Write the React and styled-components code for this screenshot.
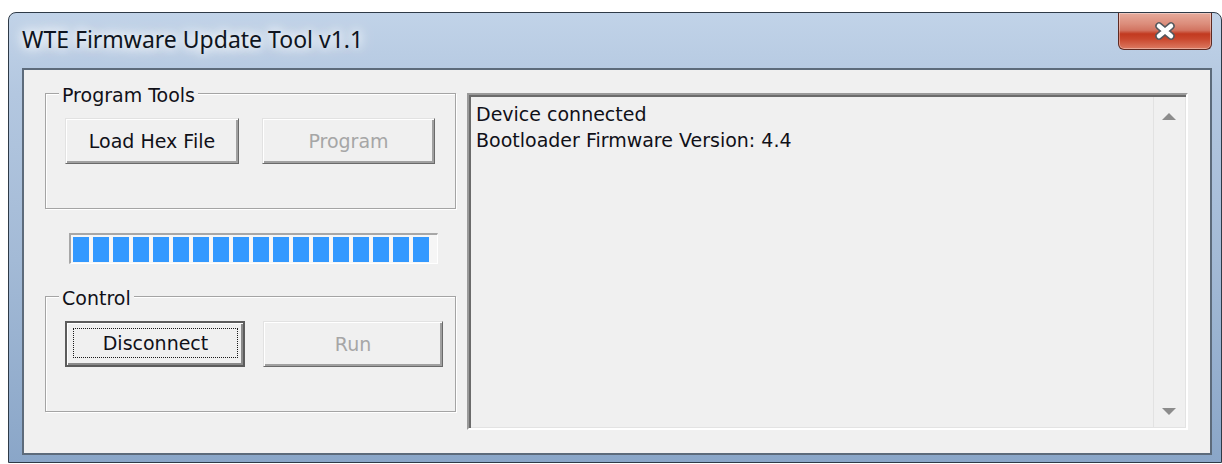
import React from "react";
import styled, { createGlobalStyle } from "styled-components";

const GlobalStyle = createGlobalStyle`
  html, body { margin: 0; padding: 0; background: #ffffff; }
  body { font-family: 'DejaVu Sans', 'Liberation Sans', sans-serif; }
  * { box-sizing: border-box; }
`;

const UI_FONT = `'DejaVu Sans', 'Liberation Sans', sans-serif`;

const Window = styled.div`
  margin: 12px 0 0 8px;
  width: 1214px;
  height: 451px;
  display: flex;
  flex-direction: column;
  padding: 0 9px 7px 13px;
  border: 1px solid #2e3a47;
  border-radius: 8px 8px 0 0;
  background: linear-gradient(180deg, #c1d3e8 0%, #b3c7e0 18%, #a3bad6 55%, #8aa6c8 100%);
  overflow: hidden;
`;

const TitleBar = styled.div`
  height: 55px;
  display: flex;
  justify-content: space-between;
  align-items: flex-start;
`;

const Title = styled.div`
  margin-top: 12px;
  font-family: 'Noto Sans', 'Open Sans', sans-serif;
  font-size: 23px;
  line-height: 28px;
  color: #0e1420;
  text-shadow: 0 0 10px #ffffff, 0 0 14px #ffffff, 0 0 20px rgba(255, 255, 255, 0.85);
`;

const CloseButton = styled.div`
  width: 94px;
  height: 37px;
  display: flex;
  align-items: center;
  justify-content: center;
  border: 1px solid #5e2a22;
  border-top: none;
  border-radius: 0 0 6px 6px;
  background: linear-gradient(
    180deg,
    #e6ab9c 0%,
    #dc8d7b 30%,
    #d27461 48%,
    #c23a20 58%,
    #c9472d 72%,
    #dc7a62 100%
  );
  box-shadow: inset 0 0 0 1px rgba(255, 255, 255, 0.35);
`;

const Client = styled.div`
  flex: 1;
  display: flex;
  gap: 11px;
  padding: 23px 22px 0 21px;
  border: 2px solid #5d6b7b;
  background: #f0f0f0;
  font-family: ${UI_FONT};
  font-size: 19px;
  color: #101018;
`;

const LeftColumn = styled.div`
  width: 411px;
  display: flex;
  flex-direction: column;
`;

const GroupBox = styled.div`
  height: 116px;
  display: flex;
  flex-direction: column;
  border: 1px solid #a4a4a4;
  box-shadow: inset 1px 1px 0 #ffffff, 1px 1px 0 #ffffff;
`;

const Caption = styled.span`
  align-self: flex-start;
  margin: -9px 0 0 13px;
  padding: 0 3px;
  line-height: 20px;
  background: #f0f0f0;
  white-space: nowrap;
`;

const ButtonRow = styled.div`
  display: flex;
  gap: ${(p) => p.$gap}px;
  margin: 13px 0 0 19px;
`;

const Button = styled.div`
  width: ${(p) => p.$width}px;
  height: 46px;
  display: flex;
  align-items: center;
  justify-content: center;
  line-height: 22px;
  white-space: nowrap;
  background: #f0f0f0;
  color: ${(p) => (p.$disabled ? "#a6a6a6" : "#101018")};
  border: 1px solid;
  border-color: #e2e2e2 #6a6a6a #6a6a6a #e2e2e2;
  box-shadow: inset 1px 1px 0 #ffffff, inset -2px -2px 0 #a0a0a0;
`;

const DefaultButton = styled.div`
  width: ${(p) => p.$width}px;
  height: 46px;
  display: flex;
  padding: 5px 5px 7px 6px;
  background: #f0f0f0;
  border: 2px solid #5c5c5c;
  box-shadow: inset 1px 1px 0 #ffffff, inset -2px -2px 0 #8a8a8a;
`;

const FocusFrame = styled.div`
  flex: 1;
  display: flex;
  align-items: center;
  justify-content: center;
  line-height: 22px;
  border: 1px dotted #1a1a1a;
`;

const Progress = styled.div`
  width: 369px;
  height: 31px;
  margin: 24px 0 32px 24px;
  display: flex;
  gap: 4px;
  padding: 2px 0 0 2px;
  background: #f6f6f6;
  border-style: solid;
  border-width: 2px 1px 1px 2px;
  border-color: #a7a7a7 #ffffff #ffffff #a7a7a7;
`;

const Block = styled.div`
  width: 16px;
  height: 25px;
  background: #3399ff;
`;

const LogBox = styled.div`
  width: 721px;
  height: 337px;
  display: flex;
  border-style: solid;
  border-width: 2px;
  border-color: #9a9a9a #ffffff #ffffff #9a9a9a;
  box-shadow: inset 2px 2px 0 #6b6b6b, inset -1px -1px 0 #e3e3e3;
  background: #f0f0f0;
`;

const LogText = styled.div`
  flex: 1;
  padding: 6px 0 0 7px;
  line-height: 26px;
`;

const ScrollTrack = styled.div`
  width: 31px;
  display: flex;
  flex-direction: column;
  justify-content: space-between;
  align-items: center;
  padding: 16px 0 12px;
  margin: 2px 2px 1px 0;
  border-left: 1px solid #e2e2e2;
  background: #f0f0f0;
`;

const Arrow = ({ down }) => (
  <svg width="14" height="7" viewBox="0 0 14 7">
    <path d={down ? "M0 0 L14 0 L7 7 Z" : "M7 0 L14 7 L0 7 Z"} fill="#8c8c8c" />
  </svg>
);

const CloseGlyph = () => (
  <svg width="22" height="18" viewBox="0 0 22 18">
    <path
      d="M5 4 L17 14 M17 4 L5 14"
      stroke="#55595e"
      strokeWidth="7.5"
      strokeLinecap="round"
    />
    <path
      d="M5 4 L17 14 M17 4 L5 14"
      stroke="#ffffff"
      strokeWidth="4.5"
      strokeLinecap="round"
    />
  </svg>
);

const blocks = Array.from({ length: 18 }, (_, i) => i);

export default function App() {
  return (
    <>
      <GlobalStyle />
      <Window>
        <TitleBar>
          <Title>WTE Firmware Update Tool v1.1</Title>
          <CloseButton>
            <CloseGlyph />
          </CloseButton>
        </TitleBar>
        <Client>
          <LeftColumn>
            <GroupBox>
              <Caption>Program Tools</Caption>
              <ButtonRow $gap={23}>
                <Button $width={174}>Load Hex File</Button>
                <Button $width={173} $disabled>
                  Program
                </Button>
              </ButtonRow>
            </GroupBox>
            <Progress>
              {blocks.map((i) => (
                <Block key={i} />
              ))}
            </Progress>
            <GroupBox>
              <Caption>Control</Caption>
              <ButtonRow $gap={18}>
                <DefaultButton $width={180}>
                  <FocusFrame>Disconnect</FocusFrame>
                </DefaultButton>
                <Button $width={180} $disabled>
                  Run
                </Button>
              </ButtonRow>
            </GroupBox>
          </LeftColumn>
          <LogBox>
            <LogText>
              Device connected
              <br />
              Bootloader Firmware Version: 4.4
            </LogText>
            <ScrollTrack>
              <Arrow />
              <Arrow down />
            </ScrollTrack>
          </LogBox>
        </Client>
      </Window>
    </>
  );
}
